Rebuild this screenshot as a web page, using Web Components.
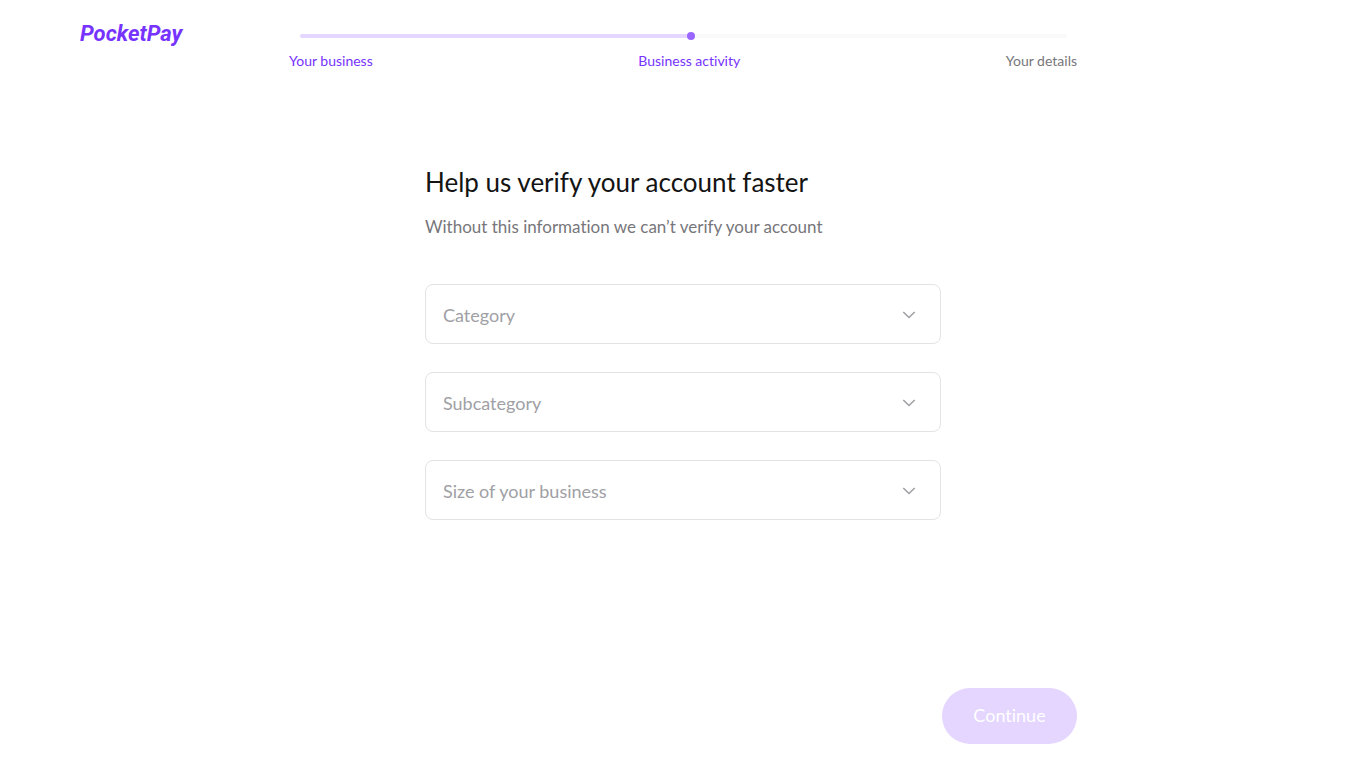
<!DOCTYPE html>
<html lang="en">
<head>
<meta charset="utf-8">
<meta name="viewport" content="width=device-width, initial-scale=1">
<title>PocketPay</title>
<style>
  body { margin: 0; background: #fff; color: #141414; font: 16px/24px Lato, "Open Sans", sans-serif; font-variant-ligatures: none; }
</style>
</head>
<body>
<pp-page>
  <pp-logo slot="logo" href="#">PocketPay</pp-logo>
  <pp-progress slot="progress" value="51">
    <pp-step done>Your business</pp-step>
    <pp-step done>Business activity</pp-step>
    <pp-step>Your details</pp-step>
  </pp-progress>
  <pp-form>
    <span slot="title">Help us verify your account faster</span>
    <span slot="hint">Without this information we can’t verify your account</span>
    <pp-select label="Category"></pp-select>
    <pp-select label="Subcategory"></pp-select>
    <pp-select label="Size of your business"></pp-select>
  </pp-form>
  <pp-button slot="action">Continue</pp-button>
</pp-page>
<script>
  const define = (name, html, setup) => {
    const template = document.createElement('template');
    template.innerHTML = html;
    customElements.define(name, class extends HTMLElement {
      constructor() {
        super();
        this.attachShadow({ mode: 'open' }).append(template.content.cloneNode(true));
      }
      connectedCallback() {
        if (setup) setup(this, this.shadowRoot);
      }
    });
  };

  define('pp-page', `
    <style>
      :host { display: flex; flex-direction: column; min-height: 100vh; box-sizing: border-box; padding-bottom: 24px; }
      header { display: grid; grid-template-columns: 1fr minmax(0, 788px) 1fr; padding-top: 20px; }
      .logo { padding-left: 80px; }
      main { flex: 1; width: 100%; max-width: 516px; margin: 0 auto; padding-top: 95px; }
      footer { display: flex; justify-content: flex-end; width: 100%; max-width: 788px; margin: 24px auto 0; }
    </style>
    <header>
      <div class="logo"><slot name="logo"></slot></div>
      <slot name="progress"></slot>
    </header>
    <main><slot></slot></main>
    <footer><slot name="action"></slot></footer>`);

  define('pp-logo', `
    <style>
      :host { display: block; }
      a { display: block; color: #7733ff; font: italic bold 22px/28px Roboto, "Liberation Sans", sans-serif; text-decoration: none; }
    </style>
    <a><slot></slot></a>`,
    (host, root) => { root.querySelector('a').href = host.getAttribute('href'); });

  define('pp-progress', `
    <style>
      :host { display: block; padding-top: 14px; }
      .track { display: flex; align-items: center; height: 4px; margin: 0 10px 0 11px; border-radius: 2px; background: #fafafa; }
      .fill { position: relative; height: 4px; border-radius: 2px; background: #e4d6ff; }
      .fill::after { content: ""; position: absolute; right: -4px; top: -2px; width: 8px; height: 8px; border-radius: 50%; background: #9966ff; }
      .steps { display: flex; justify-content: space-between; margin-top: 13px; }
    </style>
    <div class="track" role="progressbar" aria-label="Sign-up progress" aria-valuemin="0" aria-valuemax="100"><div class="fill"></div></div>
    <div class="steps"><slot></slot></div>`,
    (host, root) => {
      const value = host.getAttribute('value');
      root.querySelector('.track').setAttribute('aria-valuenow', value);
      root.querySelector('.fill').style.width = value + '%';
    });

  define('pp-step', `
    <style>
      :host { display: block; font-size: 14px; line-height: 20px; color: #77767b; }
      :host([done]) { color: #7733ff; }
    </style>
    <slot></slot>`);

  define('pp-form', `
    <style>
      :host { display: block; }
      h1 { margin: 0; font-size: 26px; line-height: 32px; font-weight: 400; }
      p { margin: 17px 0 45px; font-size: 17px; line-height: 24px; color: #77767b; }
      form { display: grid; gap: 28px; }
    </style>
    <h1><slot name="title"></slot></h1>
    <p><slot name="hint"></slot></p>
    <form><slot></slot></form>`);

  define('pp-select', `
    <style>
      :host { display: grid; position: relative; height: 60px; color: #a0a0a5; }
      select { appearance: none; width: 100%; height: 100%; padding: 16px 48px 0 17px; border: 1px solid #e3e3e5; border-radius: 8px; background: #fff; color: #141414; font: inherit; font-size: 18px; }
      label { position: absolute; left: 18px; top: 19px; font-size: 18px; line-height: 24px; pointer-events: none; }
      select:valid + label { top: 6px; font-size: 14px; }
      svg { position: absolute; right: 24px; top: 23px; width: 16px; height: 16px; pointer-events: none; }
    </style>
    <select id="field" required><option value="" hidden></option></select>
    <label for="field"></label>
    <svg viewBox="0 0 16 16" fill="none" stroke="currentColor" stroke-width="1.6" aria-hidden="true"><path d="M2.3 5 8 10.5 13.7 5"/></svg>`,
    (host, root) => { root.querySelector('label').textContent = host.getAttribute('label'); });

  define('pp-button', `
    <style>
      :host { display: block; }
      button { min-width: 135px; height: 56px; padding: 0 30px 2px; border: 0; border-radius: 28px; background: #e4d6ff; color: #fff; font: inherit; font-size: 18px; }
    </style>
    <button type="button" disabled><slot></slot></button>`);
</script>
</body>
</html>
